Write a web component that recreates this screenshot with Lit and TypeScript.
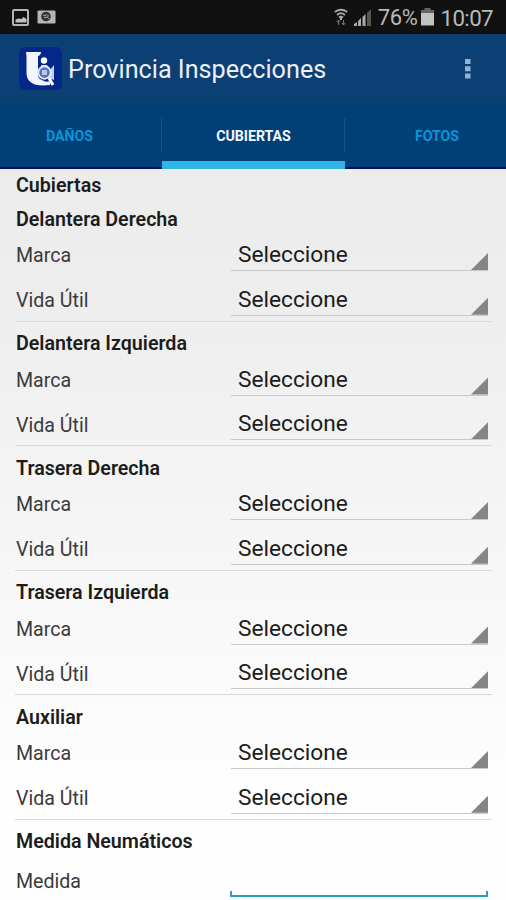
import { LitElement, html, css } from "lit";
import { customElement, property } from "lit/decorators.js";

@customElement("status-bar")
class StatusBar extends LitElement {
  static styles = css`
    :host { display: flex; align-items: center; height: 34px; padding: 0 13px 0 12px; background: #111; color: #b9b9b9; box-sizing: border-box; }
    .picture { width: 17px; height: 17px; margin-right: 8px; }
    .mail { width: 19px; height: 14px; }
    .grow { flex: 1; }
    .wifi { width: 14px; height: 18px; margin-right: 6px; }
    .signal { width: 18px; height: 18px; margin-right: 6px; }
    .battery { width: 13px; height: 18px; margin: 0 6px 0 4px; }
    .text { font-size: 22px; line-height: 34px; padding-top: 2px; letter-spacing: -0.4px; }
    .clock { font-size: 22.300px; letter-spacing: -0.600px; }
  `;
  render() {
    return html`
      <svg class="picture" viewBox="0 0 17 17"><rect x="1" y="1" width="15" height="15" rx="1" fill="#111" stroke="#b5b5b5" stroke-width="2"/><path d="M3.500 13.500V10.500l3-1 3 .5 2-2 3 2v3.500z" fill="#c2c2c2"/></svg>
      <svg class="mail" viewBox="0 0 19 14"><rect x=".5" y=".5" width="18" height="13" rx="1" fill="#b5b5b5"/><circle cx="9" cy="6.500" r="4.800" fill="#333"/><path d="M6 5l2 1 2-2M7 8l3-1 2 2M10 6h2" stroke="#aaa" fill="none"/></svg>
      <span class="grow"></span>
      <svg class="wifi" viewBox="0 0 14 18"><g fill="none" stroke="#a5a5a5" stroke-width="1.900"><path d="M.8 4Q7-.5 13.200 4M3 7Q7 3.500 11 7M5 9.500Q7 8 9 9.500"/></g><path d="M6 9h2v3H6z" fill="#aaa"/><path d="M4.500 12v5M2.800 14l1.700-2 1.700 2M9.500 12v5M7.800 15l1.700 2 1.700-2" stroke="#777" fill="none"/></svg>
      <svg class="signal" viewBox="0 0 18 18"><path d="M0 18v-2l3-2v4z" fill="#aaa"/><path d="M4 13l3-3v8H4zM8.500 9l3-3v12h-3z" fill="#aaa"/><path d="M13 5l4-4v17h-4z" fill="#555"/></svg>
      <span class="text">76%</span>
      <svg class="battery" viewBox="0 0 13 18"><path d="M3.500 0h6v2H13v4H0V2h3.500z" fill="#666"/><path d="M0 5h13v12.500H0z" fill="#c2c2c2"/></svg>
      <span class="text clock">10:07</span>`;
  }
}

@customElement("action-bar")
class ActionBar extends LitElement {
  static styles = css`
    :host { display: flex; align-items: center; height: 69px; padding: 0 35px 0 18px; background: #0c4074; color: #eeeef8; box-sizing: border-box; }
    .logo { width: 45px; height: 45px; margin-right: 5px; }
    .title { flex: 1; font-size: 25.200px; line-height: 32px; padding-top: 3px; }
    .more { width: 7px; height: 20px; }
  `;
  render() {
    return html`
      <svg class="logo" viewBox="0 0 45 45">
        <rect x="1" y="1" width="43" height="43" rx="6" fill="#03288a"/>
        <path d="M8 6h15q0 3-3 4v19q0 4 4 5 4 3 8 1v4Q8 42 8.500 26V10z" fill="#f4f6ff"/>
        <circle cx="26" cy="14.500" r="3.200" fill="#fff"/>
        <path d="M23 19h6l3 5 4-5v15l-5-2-8-3z" fill="#c4d1ee"/>
        <circle cx="26.500" cy="26.500" r="6.200" fill="#5372b9" stroke="#e2e9fa" stroke-width="2"/>
        <path d="M24 24h5v5h-5z" fill="#b9c8e9"/>
        <path d="M31 32l4 7" stroke="#fff" stroke-width="3"/>
      </svg>
      <div class="title">Provincia Inspecciones</div>
      <svg class="more" viewBox="0 0 7 20"><path d="M1 0h5.500v5H1zM1 7.300h5.500v5H1zM1 14.500h5.500v5H1z" fill="#93b3d4"/></svg>`;
  }
}

@customElement("tab-strip")
class TabStrip extends LitElement {
  static styles = css`
    :host { display: grid; grid-template-columns: 162px 183px 161px; height: 66px; background: #014077; overflow: hidden; }
    .tab { display: flex; align-items: center; justify-content: center; box-sizing: border-box; border-bottom: 2px solid #03105f; color: #0b95d6; font-size: 14.200px; font-weight: 700; letter-spacing: -0.050px; padding-top: 2px; background: linear-gradient(#1c4e82, #1c4e82) right 15px / 1px 34px no-repeat; }
    .first { padding-right: 23px; }
    .last { padding-left: 23px; }
    .active { color: #f5f8ff; border-bottom: 8px solid #32b4e5; padding-top: 8px; }
    .tab:last-child { background: none; }
  `;
  render() {
    return html`
      <div class="tab first">DAÑOS</div>
      <div class="tab active">CUBIERTAS</div>
      <div class="tab last">FOTOS</div>`;
  }
}

@customElement("tire-group")
class TireGroup extends LitElement {
  @property() heading = "";
  static styles = css`
    :host { display: block; height: 124.500px; box-sizing: border-box; margin: 0 14px 0 15px; border-bottom: 1px solid #d9d9d9; }
    .heading { height: 30px; box-sizing: border-box; padding: 10.900px 0 0 1px; font-size: 19.650px; line-height: 24px; font-weight: 600; color: #1c1c1c; }
    .row { display: flex; height: 44.800px; }
    .label { width: 216px; padding: 17.300px 0 0 1px; box-sizing: border-box; font-size: 19.600px; line-height: 24px; color: #3a3a3a; }
    .spinner { position: relative; width: 257px; height: 44px; box-sizing: border-box; padding: 16.200px 0 0 7px; border-bottom: 1px solid #c8c8c8; font-size: 22.700px; line-height: 24px; color: #1c1c1c; }
    .corner { position: absolute; right: 0; bottom: 0; width: 17px; height: 17px; background: #858585; clip-path: polygon(100% 0, 100% 100%, 0 100%); }
  `;
  render() {
    return html`
      <div class="heading">${this.heading}</div>
      ${["Marca", "Vida Útil"].map((label) => html`
        <div class="row">
          <div class="label">${label}</div>
          <div class="spinner">Seleccione<span class="corner"></span></div>
        </div>`)}`;
  }
}

@customElement("app-root")
class AppRoot extends LitElement {
  static styles = css`
    :host { display: block; width: 506px; height: 900px; overflow: hidden; font-family: Roboto, "Liberation Sans", sans-serif; }
    .content { height: 731px; overflow: hidden; background: linear-gradient(#ececec, #eeeeee 20%, #fefefe 85%); }
    .section { height: 28px; box-sizing: border-box; padding: 5px 16px 0; font-size: 19.650px; line-height: 24px; font-weight: 600; color: #1c1c1c; }
    .size { padding-top: 10.500px; height: 34px; }
    .entry { display: flex; padding: 0 16px; }
    .label { width: 214px; padding-top: 16px; font-size: 19.600px; line-height: 24px; color: #3a3a3a; }
    .field { width: 258px; height: 6px; margin-top: 37px; box-sizing: border-box; border: 1px solid #2f9cc8; border-width: 0 2px 2px; }
  `;
  render() {
    return html`
      <status-bar></status-bar>
      <action-bar></action-bar>
      <tab-strip></tab-strip>
      <div class="content">
        <div class="section">Cubiertas</div>
        ${["Delantera Derecha", "Delantera Izquierda", "Trasera Derecha", "Trasera Izquierda", "Auxiliar"].map(
          (name) => html`<tire-group .heading=${name}></tire-group>`
        )}
        <div class="section size">Medida Neumáticos</div>
        <div class="entry"><div class="label">Medida</div><div class="field"></div></div>
      </div>`;
  }
}
